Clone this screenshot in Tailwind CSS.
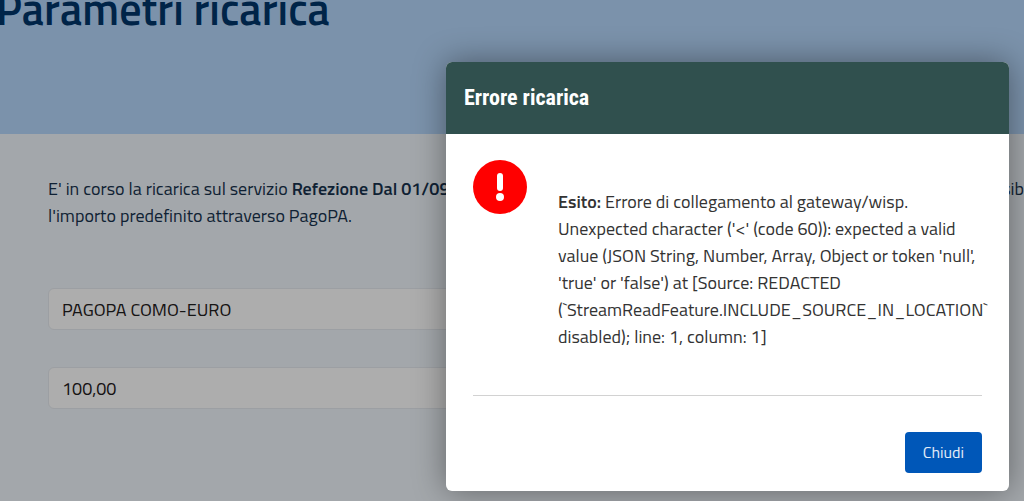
<!DOCTYPE html>
<html lang="it">
<head>
<meta charset="utf-8">
<meta name="viewport" content="width=device-width, initial-scale=1">
<title>Parametri ricarica</title>
<script src="https://cdn.jsdelivr.net/npm/@tailwindcss/browser@4"></script>
</head>
<body class="relative h-screen overflow-hidden bg-[#f1f7fc] font-['Titillium_Web','Roboto',sans-serif] text-[18px] leading-[27px] text-[#17324d]">
  <header class="flex h-[134px] items-start bg-[#b5d7fd]">
    <h1 class="-mt-[18px] -ml-1 text-[44px] leading-[54px] font-semibold text-[#00356a]">Parametri ricarica</h1>
  </header>
  <main class="pt-[41px] pl-12">
    <p class="flex justify-between whitespace-nowrap">
      <span>E' in corso la ricarica sul servizio <strong class="font-semibold">Refezione Dal 01/09</strong></span>
      <span>possib</span>
    </p>
    <p>l'importo predefinito attraverso PagoPA.</p>
    <form class="mt-[59px] mr-12 flex flex-col gap-[37px]">
      <input type="text" aria-label="Modalità di pagamento" value="PAGOPA COMO-EURO" class="h-[42px] w-full rounded-md border border-[#e6eaf0] bg-white px-[13px] text-[#1f2020]">
      <input type="text" aria-label="Importo" value="100,00" class="h-[42px] w-full rounded-md border border-[#e6eaf0] bg-white px-[13px] text-[#1f2020]">
    </form>
  </main>

  <!-- Modal layer -->
  <div class="absolute inset-0 flex items-start justify-end bg-black/32 pt-[62px] pr-[15px]">
    <dialog open aria-labelledby="titolo" class="static m-0 w-[563px] rounded-md bg-white text-[#333] shadow-[0_0_32px_rgba(0,0,0,0.4)]">
      <h2 id="titolo" class="rounded-t-md bg-[#30504e] px-[18px] py-[22px] font-['Roboto_Condensed','Liberation_Sans_Narrow','Roboto',sans-serif] text-[22px] leading-7 font-bold text-white">Errore ricarica</h2>
      <div class="px-[27px] pt-[26px] pb-[18px]">
        <div class="flex gap-[31px] border-b border-[#d2d2d2] pb-[45px]">
          <svg viewBox="0 0 54 54" class="size-[54px] shrink-0" aria-hidden="true">
            <circle cx="27" cy="27" r="27" fill="#f00"/>
            <rect x="24" y="13" width="6" height="18" rx="3" fill="#fff"/>
            <circle cx="27" cy="37" r="4" fill="#fff"/>
          </svg>
          <p class="pt-[28px] whitespace-nowrap"><strong class="font-semibold">Esito:</strong> Errore di collegamento al gateway/wisp.<br>Unexpected character ('&lt;' (code 60)): expected a valid<br>value (JSON String, Number, Array, Object or token 'null',<br>'true' or 'false') at [Source: REDACTED<br>(`StreamReadFeature.INCLUDE_SOURCE_IN_LOCATION`<br>disabled); line: 1, column: 1]</p>
        </div>
        <div class="flex justify-end pt-9">
          <button type="button" class="h-[41px] rounded-sm bg-[#0057b8] px-[18px] text-[16px] text-[#e4edf8]">Chiudi</button>
        </div>
      </div>
    </dialog>
  </div>
</body>
</html>
